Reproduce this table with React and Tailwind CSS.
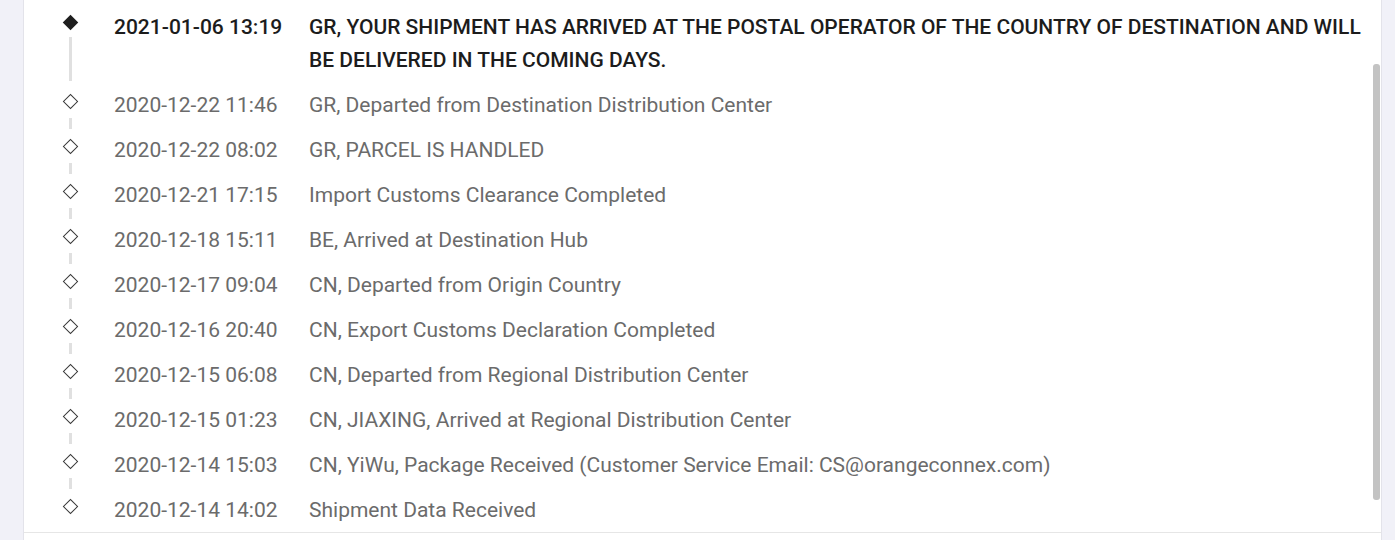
import React from 'react';

const events = [
  { time: '2021-01-06 13:19', text: 'GR, YOUR SHIPMENT HAS ARRIVED AT THE POSTAL OPERATOR OF THE COUNTRY OF DESTINATION AND WILL BE DELIVERED IN THE COMING DAYS.', current: true },
  { time: '2020-12-22 11:46', text: 'GR, Departed from Destination Distribution Center' },
  { time: '2020-12-22 08:02', text: 'GR, PARCEL IS HANDLED' },
  { time: '2020-12-21 17:15', text: 'Import Customs Clearance Completed' },
  { time: '2020-12-18 15:11', text: 'BE, Arrived at Destination Hub' },
  { time: '2020-12-17 09:04', text: 'CN, Departed from Origin Country' },
  { time: '2020-12-16 20:40', text: 'CN, Export Customs Declaration Completed' },
  { time: '2020-12-15 06:08', text: 'CN, Departed from Regional Distribution Center' },
  { time: '2020-12-15 01:23', text: 'CN, JIAXING, Arrived at Regional Distribution Center' },
  { time: '2020-12-14 15:03', text: 'CN, YiWu, Package Received (Customer Service Email: CS@orangeconnex.com)' },
  { time: '2020-12-14 14:02', text: 'Shipment Data Received' },
];

export default function App() {
  return (
    <div
      className="h-[540px] w-[1395px] overflow-hidden bg-[#f1f1f8] flex pl-[23px] pr-[13px]"
      style={{ fontFamily: 'Roboto, "Liberation Sans", sans-serif' }}
    >
      {/* card */}
      <div className="relative flex-1 bg-white border-l border-r border-[#e3e3ea] flex flex-col">
        <ul className="pt-[5px] pr-[12px] border-b border-[#e6e6e6]">
          {events.map((ev, i) => {
            const isLast = i === events.length - 1;
            return (
              <li
                key={ev.time + i}
                className={`relative flex text-[21px] leading-[33px] ${isLast ? 'pt-[6px] pb-[5px]' : 'py-[6px]'}`}
              >
                {/* timeline marker */}
                <div className="relative w-[90px] shrink-0">
                  {ev.current ? (
                    <span className="absolute left-[41px] top-[6px] w-[11px] h-[11px] rotate-45 bg-[#1e1e1e]" />
                  ) : (
                    <span className="absolute left-[41px] top-[7px] w-[11px] h-[11px] rotate-45 border-[1.5px] border-[#3a3a3a] bg-white" />
                  )}
                  {!isLast && (
                    <span
                      className={`absolute left-[45px] w-[3px] bg-[#e0e0e0] ${
                        ev.current ? 'top-[26px] -bottom-[4px]' : 'top-[29px] -bottom-[7px]'
                      }`}
                    />
                  )}
                </div>
                <div
                  className={`w-[195px] shrink-0 ${
                    ev.current ? 'font-medium text-[#1c1c1c]' : 'text-[#6b6b6b]'
                  }`}
                >
                  {ev.time}
                </div>
                <div
                  className={`flex-1 ${ev.current ? 'font-medium text-[#1c1c1c]' : 'text-[#6b6b6b]'}`}
                >
                  {ev.text}
                </div>
              </li>
            );
          })}
        </ul>

        {/* scrollbar overlay */}
        <div className="absolute right-[1px] top-[64px] w-[7px] h-[436px] rounded-[3px] bg-[#c3c3c3]" />
      </div>
    </div>
  );
}
